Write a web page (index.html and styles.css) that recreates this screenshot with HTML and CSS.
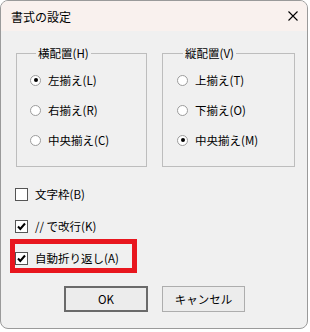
FILE: index.html
```html
<!DOCTYPE html>
<html lang="ja">
<head>
  <meta charset="UTF-8" />
  <title>書式の設定</title>
  <link rel="stylesheet" href="styles.css">
</head>
<body>
  <div class="window">
    <div class="titlebar">
      <span class="title">書式の設定</span>
      <svg class="close" width="10" height="10" viewBox="0 0 10 10">
        <path d="M0.5 0.5 L9.5 9.5 M9.5 0.5 L0.5 9.5" stroke="#000" stroke-width="1.1" fill="none" />
      </svg>
    </div>

    <div class="content">
      <div class="groups">
        <fieldset class="group group-h">
          <legend>横配置(H)</legend>
          <div class="opt"><span class="radio checked"></span>左揃え(L)</div>
          <div class="opt"><span class="radio"></span>右揃え(R)</div>
          <div class="opt"><span class="radio"></span>中央揃え(C)</div>
        </fieldset>
        <fieldset class="group group-v">
          <legend>縦配置(V)</legend>
          <div class="opt"><span class="radio"></span>上揃え(T)</div>
          <div class="opt"><span class="radio"></span>下揃え(O)</div>
          <div class="opt"><span class="radio checked"></span>中央揃え(M)</div>
        </fieldset>
      </div>

      <div class="checks">
        <div class="chk"><span class="box"></span>文字枠(B)</div>
        <div class="chk"><span class="box checked">
          <svg width="11" height="11" viewBox="0 0 11 11"><path d="M2 5.5 L4.3 8 L9 2.5" stroke="#000" stroke-width="2" fill="none" /></svg>
        </span>// で改行(K)</div>
        <div class="chk marked"><span class="box checked">
          <svg width="11" height="11" viewBox="0 0 11 11"><path d="M2 5.5 L4.3 8 L9 2.5" stroke="#000" stroke-width="2" fill="none" /></svg>
        </span>自動折り返し(A)
          <div class="highlight"></div>
        </div>
      </div>

      <div class="buttons">
        <button class="btn default">OK</button>
        <button class="btn">キャンセル</button>
      </div>
    </div>
  </div>
</body>
</html>
```

FILE: styles.css
```css
body {
  margin: 0;
  padding: 0;
  background: #fff;
  font-family: "Noto Sans CJK JP", "Liberation Sans", sans-serif;
  font-size: 11.5px;
  color: #000;
}
.window {
  width: 308px;
  height: 329px;
  box-sizing: border-box;
  border: 1px solid #9a9a9a;
  border-radius: 8px;
  overflow: hidden;
  background: #f0f0f0;
}
.titlebar {
  height: 30px;
  background: #f9f1ee;
  display: flex;
  align-items: center;
  justify-content: space-between;
  padding: 0 9px 0 10px;
}
.title {
  font-size: 12px;
}
.content {
  padding: 15px 0 0 14px;
}
.groups {
  display: flex;
  gap: 15px;
  padding-left: 1px;
}
.group {
  margin: 0;
  border: 1px solid #bdbdbd;
  padding: 5px 0 11px 13px;
  box-sizing: border-box;
}
.group-h {
  width: 131px;
}
.group-v {
  width: 133px;
  padding-left: 14px;
}
legend {
  margin-left: 6px;
  padding: 0 2px;
  line-height: 14px;
}
.opt {
  height: 30px;
  display: flex;
  align-items: center;
  gap: 7px;
}
.radio {
  width: 11px;
  height: 11px;
  box-sizing: border-box;
  border: 1px solid #9c9c9c;
  border-radius: 50%;
  background: #fff;
  display: flex;
  align-items: center;
  justify-content: center;
}
.radio.checked::after {
  content: "";
  width: 4px;
  height: 4px;
  border-radius: 50%;
  background: #000;
}
.checks {
  margin-top: 11px;
}
.chk {
  position: relative;
  height: 32px;
  display: flex;
  align-items: center;
  gap: 7px;
}
.box {
  width: 13px;
  height: 13px;
  box-sizing: border-box;
  border: 1px solid #555;
  background: #fff;
  display: flex;
  align-items: center;
  justify-content: center;
}
.highlight {
  position: absolute;
  left: -5px;
  top: -3px;
  width: 127px;
  height: 34px;
  box-sizing: border-box;
  border: 5px solid #e8161e;
}
.buttons {
  margin-top: 12px;
  margin-left: 49px;
  display: flex;
  gap: 14px;
}
.btn {
  width: 84px;
  height: 26px;
  box-sizing: border-box;
  background: #ececec;
  border: 1px solid #adadad;
  font-family: inherit;
  font-size: 11.5px;
  color: #000;
  padding: 0;
}
.btn.default {
  border: 2px solid #6a6a6a;
}
.btn + .btn {
  width: 83px;
}
```
